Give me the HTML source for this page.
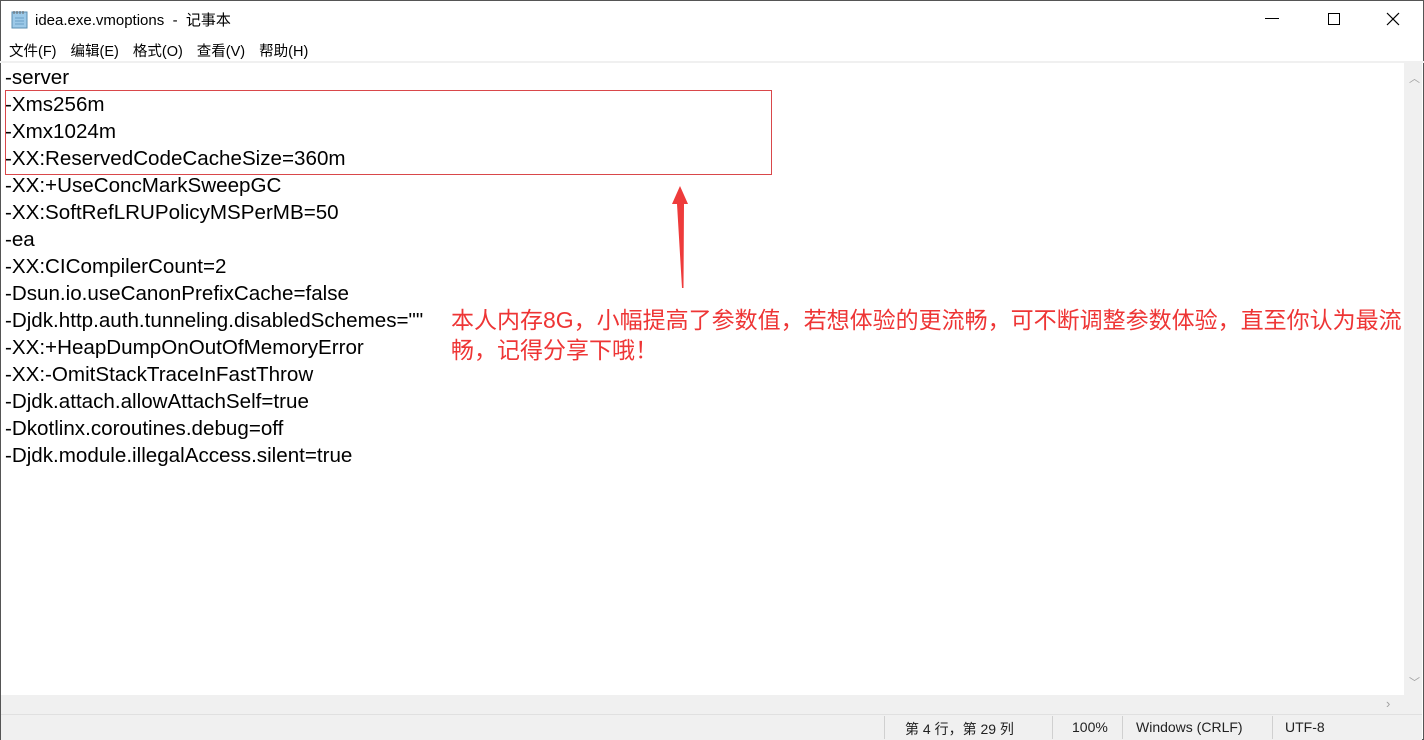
<!DOCTYPE html>
<html><head><meta charset="utf-8"><style>
body{margin:0;width:1424px;height:740px;overflow:hidden;background:#fff;font-family:"Liberation Sans","Noto Sans CJK SC",sans-serif;position:relative}
.abs{position:absolute}
.code{left:5px;top:64px;font-size:20.6px;line-height:27px;color:#000;white-space:pre}
.menu span{margin-right:14px}
</style></head><body>
<div class="abs" style="left:0;top:0;width:1424px;height:740px;border:1px solid #555;box-sizing:border-box"></div>
<svg class="abs" style="left:11px;top:9px" width="18" height="20"><rect x="1" y="3" width="15" height="16" fill="#9cc9e8" stroke="#5a8db0"/><path d="M3 2v3M6 2v3M9 2v3M12 2v3" stroke="#666"/><path d="M4 9h9M4 12h9M4 15h9" stroke="#6aa0c6"/></svg>
<div class="abs" style="left:35px;top:9px;font-size:15px;color:#000">idea.exe.vmoptions &nbsp;-&nbsp; 记事本</div>
<div class="abs" style="left:1265px;top:18px;width:14px;height:1px;background:#000"></div>
<div class="abs" style="left:1328px;top:13px;width:10px;height:10px;border:1px solid #000"></div>
<svg class="abs" style="left:1386px;top:12px" width="14" height="14"><path d="M1 1L13 13M13 1L1 13" stroke="#000" stroke-width="1.2"/></svg>
<div class="abs menu" style="left:9px;top:40px;font-size:14.5px;color:#000"><span>文件(F)</span><span>编辑(E)</span><span>格式(O)</span><span>查看(V)</span><span>帮助(H)</span></div>
<div class="abs" style="left:0;top:61px;width:1424px;height:2px;background:#f0f0f0"></div>
<div class="abs code">-server
-Xms256m
-Xmx1024m
-XX:ReservedCodeCacheSize=360m
-XX:+UseConcMarkSweepGC
-XX:SoftRefLRUPolicyMSPerMB=50
-ea
-XX:CICompilerCount=2
-Dsun.io.useCanonPrefixCache=false
-Djdk.http.auth.tunneling.disabledSchemes=""
-XX:+HeapDumpOnOutOfMemoryError
-XX:-OmitStackTraceInFastThrow
-Djdk.attach.allowAttachSelf=true
-Dkotlinx.coroutines.debug=off
-Djdk.module.illegalAccess.silent=true</div>
<div class="abs" style="left:5px;top:90px;width:765px;height:83px;border:1px solid #d9474a"></div>
<svg class="abs" style="left:660px;top:180px" width="40" height="115"><path d="M20 6L28 24H24L23.5 108H22L17 24H12Z" fill="#ee3b3b"/></svg>
<div class="abs" style="left:451px;top:305px;font-size:23px;line-height:30px;color:#ee3535;white-space:nowrap">本人内存8G，小幅提高了参数值，若想体验的更流畅，可不断调整参数体验，直至你认为最流<br>畅，记得分享下哦！</div>
<div class="abs" style="left:1404px;top:63px;width:18px;height:632px;background:#f0f0f0"></div>
<div class="abs" style="left:1409px;top:70px;color:#a0a0a0;font-size:11px">︿</div>
<div class="abs" style="left:1409px;top:674px;color:#a0a0a0;font-size:11px">﹀</div>
<div class="abs" style="left:1px;top:695px;width:1421px;height:19px;background:#f0f0f0"></div>
<div class="abs" style="left:1386px;top:696px;color:#a0a0a0;font-size:13px">›</div>
<div class="abs" style="left:1px;top:714px;width:1421px;height:25px;background:#f0f0f0;border-top:1px solid #e0e0e0"></div>
<div class="abs" style="left:884px;top:716px;width:1px;height:23px;background:#d0d0d0"></div>
<div class="abs" style="left:1052px;top:716px;width:1px;height:23px;background:#d0d0d0"></div>
<div class="abs" style="left:1122px;top:716px;width:1px;height:23px;background:#d0d0d0"></div>
<div class="abs" style="left:1272px;top:716px;width:1px;height:23px;background:#d0d0d0"></div>
<div class="abs" style="top:719px;font-size:14px;color:#222;left:905px">第 4 行，第 29 列</div>
<div class="abs" style="top:719px;font-size:14px;color:#222;left:1072px">100%</div>
<div class="abs" style="top:719px;font-size:14px;color:#222;left:1136px">Windows (CRLF)</div>
<div class="abs" style="top:719px;font-size:14px;color:#222;left:1285px">UTF-8</div>
</body></html>
